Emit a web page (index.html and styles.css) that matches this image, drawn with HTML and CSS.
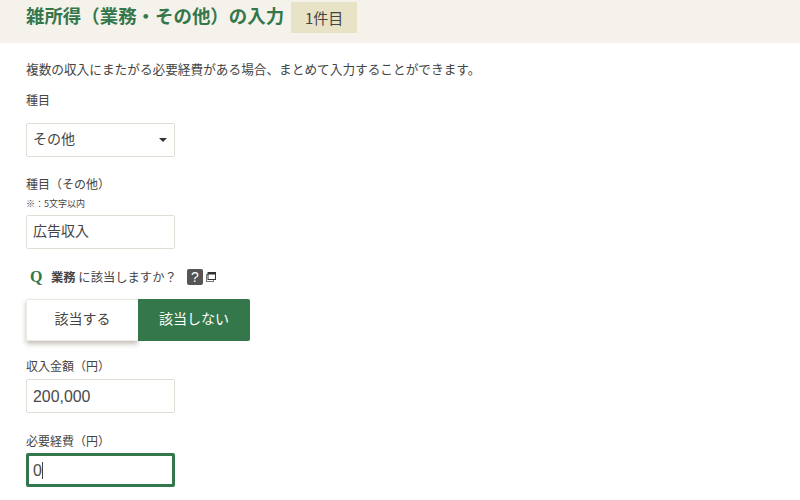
FILE: index.html
```html
<!DOCTYPE html>
<html lang="ja">
<head>
<meta charset="utf-8">
<title>雑所得の入力</title>
<link rel="stylesheet" href="styles.css">
</head>
<body>
<header class="head">
  <h1 class="title">雑所得（業務・その他）の入力</h1>
  <span class="tag">1件目</span>
</header>
<main class="main">
  <p class="lead">複数の収入にまたがる必要経費がある場合、まとめて入力することができます。</p>
  <div class="lbl lbl-first">種目</div>
  <div class="field select"><span>その他</span><i class="caret"></i></div>
  <div class="lbl lbl-other">種目（その他）</div>
  <div class="note">※：5文字以内</div>
  <div class="field">広告収入</div>
  <div class="q">
    <span class="q-mark">Q</span>
    <span class="q-text"><b>業務</b> に該当しますか？</span>
    <span class="help">?</span>
    <svg class="win" width="10" height="10" viewBox="0 0 10 10"><rect x="0.5" y="2.5" width="7" height="7" fill="#fff" stroke="#777"/><rect x="2" y="0.5" width="7.5" height="7" fill="#fff" stroke="#333"/><rect x="2" y="0.5" width="7.5" height="2" fill="#333"/></svg>
  </div>
  <div class="toggle">
    <div class="opt opt-yes">該当する</div>
    <div class="opt opt-no">該当しない</div>
  </div>
  <div class="lbl lbl-amt">収入金額（円）</div>
  <div class="field num">200,000</div>
  <div class="lbl lbl-exp">必要経費（円）</div>
  <div class="field num focus">0<i class="cursor"></i></div>
</main>
</body>
</html>
```
FILE: styles.css
```css
html, body { margin: 0; padding: 0; background: #fff; }
body {
  width: 800px; height: 500px; overflow: hidden;
  font-family: "Noto Sans CJK JP", "Noto Sans", sans-serif;
  color: #444;
}
.head {
  display: flex; align-items: flex-start; gap: 7px;
  height: 43px; padding: 2px 0 0 26px; box-sizing: border-box;
  background: #f5f2eb;
}
.title {
  margin: 0; font-size: 18.45px; line-height: 27px; font-weight: 700; color: #34774b;
}
.tag {
  width: 66px; height: 31px; background: #e8e2c6; color: #444;
  font-size: 15px; line-height: 31px; text-align: center;
}
.main { padding: 0 26px; }
.lead { margin: 17px 0 0; font-size: 12.66px; line-height: 18px; }
.lbl { font-size: 12px; line-height: 18px; }
.lbl-first { margin-top: 13px; }
.lbl-other { margin-top: 18px; }
.lbl-amt { margin-top: 16px; }
.lbl-exp { margin-top: 19px; }
.note { font-size: 9px; line-height: 12px; margin-top: 5px; }
.field {
  box-sizing: border-box; width: 149px; height: 34px;
  border: 1px solid #e0ddd4; border-radius: 2px;
  padding: 0 6px; font-size: 14px; line-height: 29px; background: #fff;
  margin-top: 5px;
}
.select { display: flex; justify-content: space-between; align-items: flex-start; margin-top: 14px; }
.caret {
  width: 0; height: 0; margin: 14px 1px 0 0;
  border-left: 4px solid transparent; border-right: 4px solid transparent; border-top: 4px solid #333;
}
.num { font-family: "Liberation Sans", sans-serif; font-size: 15.9px; line-height: 33px; margin-top: 4px; color: #4a4a4a; }
.q { display: flex; align-items: center; height: 20px; margin-top: 18px; padding-left: 4px; font-size: 12.3px; }
.q-mark { font-family: "Liberation Serif", serif; font-weight: 700; font-size: 16px; color: #34774b; width: 21px; }
.q-text { width: 136px; }
.q-text b { font-weight: 700; }
.help {
  width: 16px; height: 16px; margin-right: 3px; background: #555; color: #fff; border-radius: 2px;
  font: 400 14px/16px "Liberation Sans", sans-serif; text-align: center;
}
.win { display: block; }
.toggle { display: flex; margin-top: 12px; width: 224px; height: 42px; }
.opt { font-size: 14px; line-height: 39px; text-align: center; box-sizing: border-box; }
.opt-yes { width: 112px; background: #fff; border-radius: 2px 0 0 2px; border: 1px solid #ece9e2; border-right: 0; line-height: 37px; box-shadow: 0 3px 5px rgba(60,50,30,.3); }
.opt-no { width: 112px; background: #34774b; color: #fff; border-radius: 0 2px 2px 0; }
.focus { border: 3px solid #34774b; padding: 0 4px; display: flex; align-items: center; margin-top: 3px; }
.cursor { display: block; width: 1px; height: 17px; background: #444; }
```
